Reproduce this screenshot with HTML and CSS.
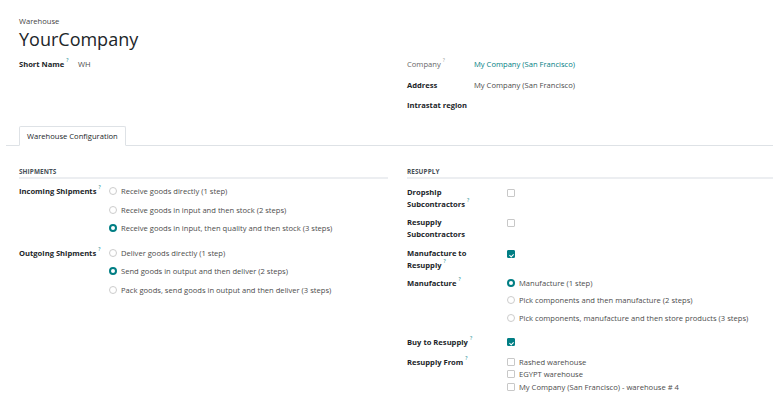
FILE: index.html
```html
<!DOCTYPE html>
<html>
<head>
<meta charset="utf-8">
<link rel="stylesheet" href="styles.css">
</head>
<body>
<div class="sheet">
  <div class="head">
    <div class="model">Warehouse</div>
    <div class="title">YourCompany</div>
  </div>
  <div class="cols top">
    <div class="group">
      <div class="row"><div class="lbl w59">Short Name<sup>?</sup></div><div class="val">WH</div></div>
    </div>
    <div class="group">
      <div class="row r1"><div class="lbl w67 light">Company<sup>?</sup></div><div class="val link">My Company (San Francisco)</div></div>
      <div class="row r2"><div class="lbl w67">Address</div><div class="val">My Company (San Francisco)</div></div>
      <div class="row r3"><div class="lbl w67">Intrastat region</div><div class="val"></div></div>
    </div>
  </div>
  <div class="tabs"><div class="tab">Warehouse Configuration</div></div>
  <div class="cols body">
    <div class="group">
      <div class="sect">SHIPMENTS</div>
      <div class="row g1">
        <div class="lbl w90">Incoming Shipments<sup>?</sup></div>
        <div class="opts">
          <div class="opt"><span class="radio"></span>Receive goods directly (1 step)</div>
          <div class="opt"><span class="radio"></span>Receive goods in input and then stock (2 steps)</div>
          <div class="opt"><span class="radio on"></span>Receive goods in input, then quality and then stock (3 steps)</div>
        </div>
      </div>
      <div class="row g2">
        <div class="lbl w90">Outgoing Shipments<sup>?</sup></div>
        <div class="opts">
          <div class="opt"><span class="radio"></span>Deliver goods directly (1 step)</div>
          <div class="opt"><span class="radio on"></span>Send goods in output and then deliver (2 steps)</div>
          <div class="opt"><span class="radio"></span>Pack goods, send goods in output and then deliver (3 steps)</div>
        </div>
      </div>
    </div>
    <div class="group">
      <div class="sect">RESUPPLY</div>
      <div class="row c1"><div class="lbl w100">Dropship Subcontractors<sup>?</sup></div><div class="val"><span class="check"></span></div></div>
      <div class="row c2"><div class="lbl w100">Resupply Subcontractors</div><div class="val"><span class="check"></span></div></div>
      <div class="row c3"><div class="lbl w100">Manufacture to Resupply<sup>?</sup></div><div class="val"><span class="check on"></span></div></div>
      <div class="row c4">
        <div class="lbl w100">Manufacture<sup>?</sup></div>
        <div class="opts mopts">
          <div class="opt"><span class="radio on"></span>Manufacture (1 step)</div>
          <div class="opt"><span class="radio"></span>Pick components and then manufacture (2 steps)</div>
          <div class="opt"><span class="radio"></span>Pick components, manufacture and then store products (3 steps)</div>
        </div>
      </div>
      <div class="row c5"><div class="lbl w100">Buy to Resupply<sup>?</sup></div><div class="val"><span class="check on"></span></div></div>
      <div class="row c6">
        <div class="lbl w100">Resupply From<sup>?</sup></div>
        <div class="opts copts">
          <div class="copt"><span class="check"></span>Rashed warehouse</div>
          <div class="copt"><span class="check"></span>EGYPT warehouse</div>
          <div class="copt"><span class="check"></span>My Company (San Francisco) - warehouse # 4</div>
        </div>
      </div>
    </div>
  </div>
</div>
</body>
</html>
```
FILE: styles.css
```css
* { box-sizing: border-box; }
html, body { margin: 0; padding: 0; background: #fff; }
body {
  font-family: "Open Sans", "Noto Sans", sans-serif;
  font-size: 7.6px;
  color: #4c4c4c;
  width: 780px;
  height: 408px;
  overflow: hidden;
}
.sheet { padding: 16px 7px 0 6px; }
.head { padding-left: 13px; }
.model { font-size: 7.6px; line-height: 11px; color: #444; }
.title { font-size: 18px; line-height: 24px; color: #212529; }
.cols { display: grid; grid-template-columns: 369px 366px; column-gap: 19px; padding-left: 13px; }
.top { margin-top: 7px; height: 68px; }
.row { display: flex; align-items: flex-start; line-height: 12px; }
.lbl { font-weight: 700; color: #212529; flex: none; }
.lbl.light { font-weight: 400; color: #666; }
.lbl sup { font-size: 5px; line-height: 5px; color: #017e84; font-weight: 400; vertical-align: top; margin-left: 2px; }
.lbl.light sup { color: #999; }
.w59 { width: 59px; }
.w67 { width: 67px; }
.w90 { width: 90px; }
.w100 { width: 100px; padding-right: 18px; }
.val { color: #4c4c4c; }
.link { color: #017e84; }
.r2 { margin-top: 9px; }
.r3 { margin-top: 8px; }
.tabs { border-bottom: 1px solid #dee2e6; padding-left: 13px; display: flex; height: 20px; }
.tab { border: 1px solid #dee2e6; border-bottom-color: #fff; margin-bottom: -1px; padding: 0 7px; line-height: 18px; color: #212529; background: #fff; white-space: nowrap; border-radius: 2px 2px 0 0; }
.body { margin-top: 21px; }
.sect { font-size: 6.4px; font-weight: 700; color: #495057; line-height: 9px; border-bottom: 2px solid #eceef1; padding-bottom: 1px; letter-spacing: 0.1px; }
.g1 { margin-top: 6px; }
.g2 { margin-top: 9px; }
.opts { display: flex; flex-direction: column; margin-top: -3px; }
.opt { display: flex; align-items: center; height: 18.5px; white-space: nowrap; }
.radio { width: 8px; height: 8px; border-radius: 50%; border: 1px solid #ccc; margin-right: 4px; flex: none; }
.radio.on { border: 2.5px solid #017e84; }
.check { display: inline-block; width: 8px; height: 8px; border: 1px solid #c8c8c8; border-radius: 1px; vertical-align: middle; position: relative; flex: none; }
.check.on { background: #017e84; border-color: #017e84; }
.check.on::after { content: ""; position: absolute; left: 2.2px; top: 1.2px; width: 1.8px; height: 3.2px; border: solid #fff; border-width: 0 1px 1px 0; transform: rotate(45deg); }
.c1 { margin-top: 7px; }
.c1 .check, .c2 .check, .c3 .check { margin-top: 1px; }
.c2 { margin-top: 6px; }
.c3 { margin-top: 7px; }
.c4 { margin-top: 6px; }
.mopts .opt { height: 17.5px; }
.c5 { margin-top: 9px; }
.c6 { margin-top: 8px; }
.copts { margin-top: 0; }
.copt { display: flex; align-items: center; height: 12.5px; white-space: nowrap; }
.copt .check { margin-right: 4px; }
```
